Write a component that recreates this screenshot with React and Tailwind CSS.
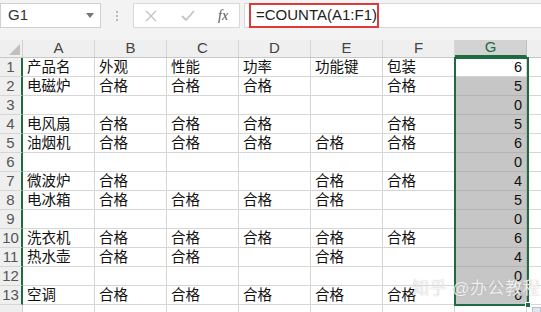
import React from "react";

const cols = ["A", "B", "C", "D", "E", "F", "G"];
const H = "合格";
const rows = [
  ["产品名", "外观", "性能", "功率", "功能键", "包装", "6"],
  ["电磁炉", H, H, H, "", H, "5"],
  ["", "", "", "", "", "", "0"],
  ["电风扇", H, H, H, "", H, "5"],
  ["油烟机", H, H, H, H, H, "6"],
  ["", "", "", "", "", "", "0"],
  ["微波炉", H, "", "", H, H, "4"],
  ["电冰箱", H, H, H, H, "", "5"],
  ["", "", "", "", "", "", "0"],
  ["洗衣机", H, H, H, H, H, "6"],
  ["热水壶", H, H, "", H, "", "4"],
  ["", "", "", "", "", "", "0"],
  ["空调", H, H, H, H, H, "6"],
];

const font = { fontFamily: '"Liberation Sans", "Noto Sans CJK SC", sans-serif' };

export default function App() {
  return (
    <div className="w-[541px] h-[312px] overflow-hidden bg-white relative" style={font}>
      {/* formula bar */}
      <div className="h-[40px] bg-[#f3f3f3] flex items-start pt-[3px]">
        <div className="w-[101px] h-[25px] bg-white border border-[#d0d0d0] flex items-center justify-between pl-[7px] pr-[6px]">
          <span className="text-[15px] text-[#333]">G1</span>
          <span className="w-0 h-0 border-l-[4px] border-r-[4px] border-t-[5px] border-l-transparent border-r-transparent border-t-[#777]"></span>
        </div>
        <div className="w-[32px] h-[25px] flex flex-col items-center justify-center gap-[2px]">
          <span className="w-[2px] h-[2px] bg-[#bbb]"></span>
          <span className="w-[2px] h-[2px] bg-[#bbb]"></span>
          <span className="w-[2px] h-[2px] bg-[#bbb]"></span>
        </div>
        <div className="w-[107px] h-[25px] bg-white border border-[#d8d8d8] flex items-center">
          <svg width="12" height="12" viewBox="0 0 12 12" className="ml-[11px]">
            <path d="M1 1 L11 11 M11 1 L1 11" stroke="#c4c4c4" strokeWidth="1.4" />
          </svg>
          <svg width="14" height="12" viewBox="0 0 14 12" className="ml-[24px]">
            <path d="M1 6 L5 10 L13 1" stroke="#c4c4c4" strokeWidth="1.8" fill="none" />
          </svg>
          <span className="ml-[23px] text-[14px] italic text-[#555]" style={{ fontFamily: '"Liberation Serif", serif' }}>fx</span>
        </div>
        <div className="ml-[4px] flex-1 h-[25px] bg-white border border-[#d8d8d8] border-r-0 flex items-stretch">
          <div className="ml-[4px] w-[130px] border-2 border-[#e0393a] flex items-center pl-[5px] -my-px">
            <span className="text-[15px] text-[#222]">=COUNTA(A1:F1)</span>
          </div>
        </div>
      </div>

      {/* grid */}
      <div className="relative">
        {/* header row */}
        <div className="flex h-[18px] bg-[#efefef] border-b border-[#c8c8c8]">
          <div className="w-[23px] shrink-0 relative border-r border-[#d0d0d0]">
            <span className="absolute right-[2px] bottom-[2px] w-0 h-0" style={{ borderBottom: "11px solid #c0c0c0", borderLeft: "11px solid transparent" }}></span>
          </div>
          {cols.map((c) => (
            <div
              key={c}
              className={
                "w-[72px] shrink-0 flex items-center justify-center text-[15px] border-r " +
                (c === "G"
                  ? "bg-[#d3d3d3] text-[#1e6b41] border-[#c0c0c0] border-b-2 border-b-[#1e6b41]"
                  : "text-[#444] border-[#d6d6d6]")
              }
            >
              {c}
            </div>
          ))}
          <div className="flex-1"></div>
        </div>

        {/* data rows */}
        {rows.map((r, i) => (
          <div key={i} className="flex h-[19px]">
            <div className="w-[23px] shrink-0 bg-[#efefef] border-b border-[#d6d6d6] border-r-2 border-r-[#1e6b41] flex items-center justify-center text-[15px] text-[#555]">
              {i + 1}
            </div>
            {r.map((v, j) => (
              <div
                key={j}
                className={
                  "w-[72px] shrink-0 border-r border-b flex items-center text-[14.5px] leading-none " +
                  (j === 6
                    ? "justify-end pr-[4px] text-[#111] " + (i === 0 ? "bg-white border-[#d6d6d6]" : "bg-[#c6c6c6] border-[#b4b4b4]")
                    : "pl-[4px] text-[#111] border-[#d6d6d6]")
                }
              >
                {v}
              </div>
            ))}
            <div className="flex-1 border-b border-[#d6d6d6]"></div>
          </div>
        ))}
        <div className="flex h-[19px]">
          <div className="w-[23px] shrink-0 bg-[#efefef] border-r border-[#d0d0d0]"></div>
          {cols.map((c) => (
            <div key={c} className="w-[72px] shrink-0 border-r border-[#d6d6d6]"></div>
          ))}
        </div>

        {/* selection overlay */}
        <div className="absolute left-[454px] top-[17px] w-[75px] h-[249px] border-2 border-[#1e6b41] pointer-events-none"></div>
        <div className="absolute left-[525px] top-[262px] w-[6px] h-[6px] bg-[#1e6b41] border border-white"></div>
        <div className="absolute left-[532px] top-[267px] w-[9px] h-[6px] bg-[#dfe6ee] border border-[#b7c3d1]"></div>

        {/* watermark */}
        <div
          className="absolute left-[412px] top-[236px] text-[17px] text-white/85 whitespace-nowrap pointer-events-none tracking-[0.5px]"
          style={{ textShadow: "0 0 1px rgba(120,120,120,0.6)" }}
        >
          知乎 @办公教程
        </div>
      </div>
    </div>
  );
}
